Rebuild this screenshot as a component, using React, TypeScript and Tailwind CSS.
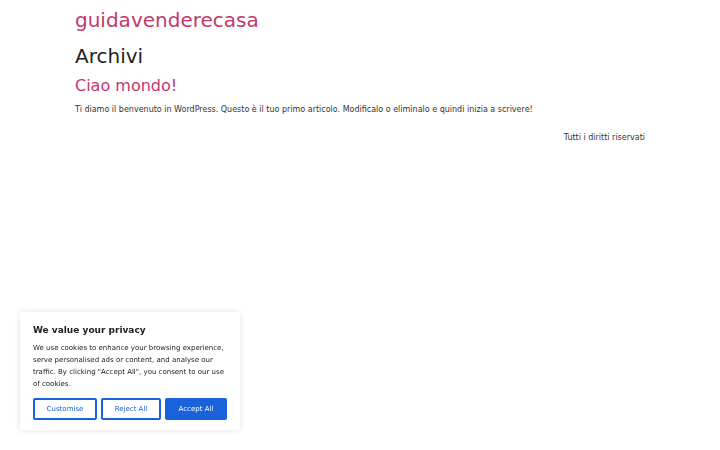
export default function App() {
  return (
    <div
      className="min-h-[450px] bg-white text-[#333]"
      style={{ fontFamily: '"DejaVu Sans", sans-serif' }}
    >
      <div className="mx-auto w-[570px]">
        {/* Header */}
        <header className="pt-[6px]">
          <p className="text-[20px] leading-[28px] text-[#c2386c]">guidavenderecasa</p>
        </header>

        {/* Archive */}
        <main className="mt-[8px]">
          <h1 className="text-[20px] leading-[28px] text-[#222]">Archivi</h1>
          <article className="mt-[5px]">
            <h2 className="text-[16px] leading-[22px] text-[#c2386c]">Ciao mondo!</h2>
            <p className="mt-[7px] text-[8px] leading-[12px] text-[#333]">
              Ti diamo il benvenuto in WordPress. Questo è il tuo primo articolo. Modificalo o eliminalo e quindi inizia a scrivere!
            </p>
          </article>
        </main>

        {/* Footer */}
        <footer className="mt-[16px] text-right text-[8px] leading-[12px] text-[#333]">
          Tutti i diritti riservati
        </footer>
      </div>

      {/* Cookie banner */}
      <div className="fixed left-[20px] bottom-[20px] w-[220px] rounded-[2px] bg-white px-[13px] pt-[11px] pb-[10px] shadow-[0_0_6px_rgba(0,0,0,0.12)]">
        <p className="text-[9px] font-bold leading-[14px] text-[#212121]">We value your privacy</p>
        <p className="mt-[5px] text-[7px] leading-[12px] text-[#212121]">
          We use cookies to enhance your browsing experience, serve personalised ads or content, and analyse our traffic. By clicking "Accept All", you consent to our use of cookies.
        </p>
        <div className="mt-[8px] flex gap-[4px]">
          <button className="h-[22px] w-[64px] rounded-[2px] border-2 border-[#1863dc] text-[7px] text-[#1863dc]">Customise</button>
          <button className="h-[22px] w-[60px] rounded-[2px] border-2 border-[#1863dc] text-[7px] text-[#1863dc]">Reject All</button>
          <button className="h-[22px] w-[62px] rounded-[2px] border-2 border-[#1863dc] bg-[#1863dc] text-[7px] text-white">Accept All</button>
        </div>
      </div>
    </div>
  );
}
